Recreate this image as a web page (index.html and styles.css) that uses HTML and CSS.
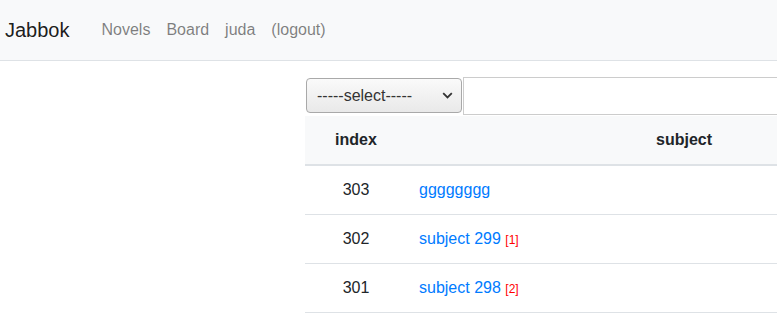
FILE: index.html
```html
<!DOCTYPE html>
<html lang="ko">
<head>
  <meta charset="UTF-8">
  <title>Jabbok</title>
  <link rel="stylesheet" href="styles.css">
</head>
<body>

  <nav class="navbar">
    <a class="brand" href="#">Jabbok</a>
    <a class="nav-link" href="#">Novels</a>
    <a class="nav-link" href="#">Board</a>
    <a class="nav-link" href="#">juda</a>
    <a class="nav-link" href="#">(logout)</a>
  </nav>

  <div class="page">
    <div class="side"></div>
    <div class="content">
      <div class="search">
        <div class="select-box">
          <span>-----select-----</span>
          <svg width="11" height="7" viewBox="0 0 11 7"><path d="M1.2 1.2 L5.5 5.4 L9.8 1.2" fill="none" stroke="#333" stroke-width="1.8"/></svg>
        </div>
        <input class="keyword" type="text">
      </div>

      <table class="board">
        <thead>
          <tr>
            <th class="col-index">index</th>
            <th class="col-subject">subject</th>
          </tr>
        </thead>
        <tbody>
          <tr>
            <td class="col-index">303</td>
            <td><a href="#">gggggggg</a></td>
          </tr>
          <tr>
            <td class="col-index">302</td>
            <td><a href="#">subject 299</a> <span class="count">[1]</span></td>
          </tr>
          <tr>
            <td class="col-index">301</td>
            <td><a href="#">subject 298</a> <span class="count">[2]</span></td>
          </tr>
        </tbody>
      </table>
    </div>
  </div>

</body>
</html>
```

FILE: styles.css
```css
body {
  font-family: "Liberation Sans", Arial, sans-serif;
  font-size: 16px;
  line-height: 1.5;
  color: #212529;
  margin: 0;
  overflow: hidden;
}

a {
  text-decoration: none;
  color: #007bff;
}

.navbar {
  display: flex;
  align-items: center;
  height: 60px;
  padding: 0 5px;
  background-color: #f8f9fa;
  border-bottom: 1px solid #dee2e6;
}

.brand {
  font-size: 20px;
  color: rgba(0, 0, 0, 0.9);
  margin-right: 24px;
}

.nav-link {
  color: rgba(0, 0, 0, 0.5);
  padding: 0 8px;
}

.page {
  display: flex;
}

.side {
  flex: 0 0 305px;
}

.content {
  flex: 0 0 700px;
  padding-top: 16px;
}

.search {
  display: flex;
  height: 38px;
  margin-bottom: 1px;
}

.select-box {
  display: flex;
  align-items: center;
  justify-content: space-between;
  width: 156px;
  height: 35px;
  margin: 1px 0 0 1px;
  padding: 0 8px 0 10px;
  box-sizing: border-box;
  border: 1px solid #a9a9a9;
  border-radius: 4px;
  background: linear-gradient(#fafafa, #e9e9e9);
  color: #333;
  font-size: 16px;
}

.keyword {
  width: 400px;
  height: 38px;
  margin: 0 0 0 1px;
  box-sizing: border-box;
  border: 1px solid #ccc;
  padding: 0 8px;
}

.board {
  width: 656px;
  border-collapse: collapse;
}

.board th {
  background-color: #f8f9fa;
  padding: 12px;
  border-bottom: 2px solid #dee2e6;
  font-weight: bold;
}

.board td {
  padding: 12px;
  border-bottom: 1px solid #dee2e6;
}

.board .col-index {
  width: 78px;
  text-align: center;
}

.count {
  color: red;
  font-size: 12px;
}
```
